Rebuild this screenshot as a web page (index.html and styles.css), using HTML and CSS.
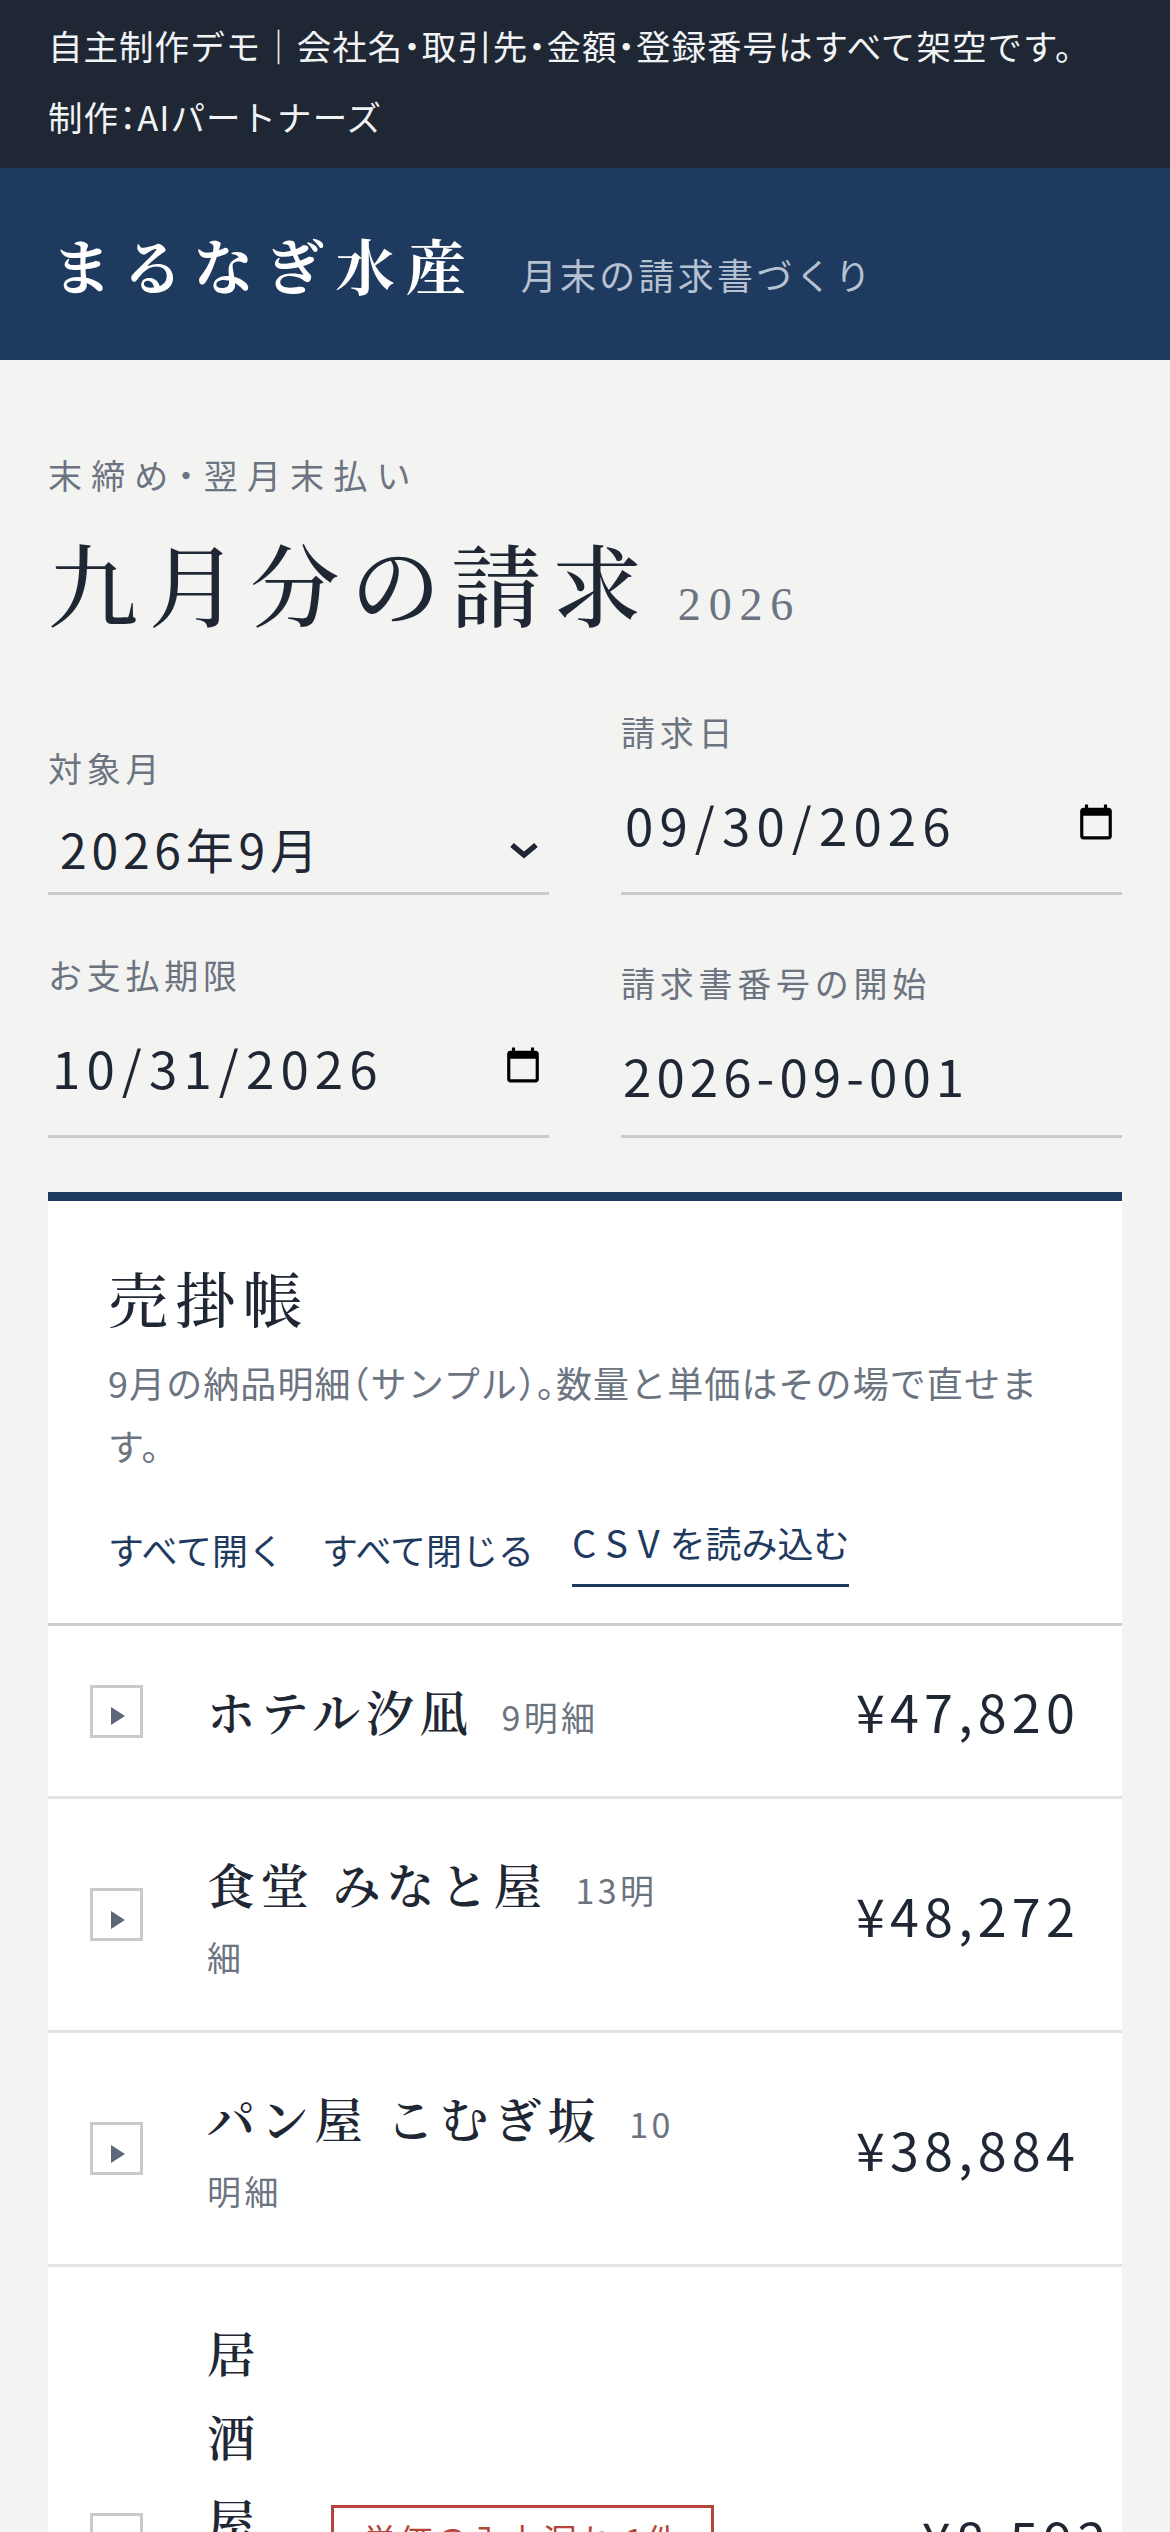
FILE: index.html
```html
<!DOCTYPE html>
<html lang="ja">
<head>
<meta charset="utf-8">
<title>まるなぎ水産 月末の請求書づくり</title>
<link rel="stylesheet" href="styles.css">
</head>
<body>
<div class="notice">
  <p>自主制作デモ<span class="sep">｜</span>会社名・取引先・金額・登録番号はすべて架空です。</p>
  <p>制作：AIパートナーズ</p>
</div>
<header class="masthead">
  <span class="brand">まるなぎ水産</span>
  <span class="tagline">月末の請求書づくり</span>
</header>
<main class="main">
  <p class="eyebrow">末締め・翌月末払い</p>
  <h1 class="title">九月分の請求<span class="year">2026</span></h1>
  <form class="fields">
    <label class="field">
      <span class="field-label">対象月</span>
      <span class="select-wrap">
        <select class="control select">
          <option>2026年9月</option>
          <option>2026年8月</option>
        </select>
        <svg class="chevron" viewBox="0 0 30 17" width="30" height="17" aria-hidden="true"><polyline points="3,3 15,13 27,3" fill="none" stroke="#1e2733" stroke-width="5.5" stroke-linejoin="miter"/></svg>
      </span>
    </label>
    <label class="field">
      <span class="field-label">請求日</span>
      <input class="control date" type="date" value="2026-09-30">
    </label>
    <label class="field">
      <span class="field-label">お支払期限</span>
      <input class="control date" type="date" value="2026-10-31">
    </label>
    <label class="field">
      <span class="field-label">請求書番号の開始</span>
      <input class="control text" type="text" value="2026-09-001">
    </label>
  </form>

  <section class="ledger">
    <div class="ledger-head">
      <h2 class="ledger-title">売掛帳</h2>
      <p class="ledger-desc">9月の納品明細（サンプル）。数量と単価はその場で直せます。</p>
      <div class="actions">
        <button class="action" type="button">すべて開く</button>
        <button class="action" type="button">すべて閉じる</button>
        <button class="action csv" type="button"><span class="latin">CSV</span>を読み込む</button>
      </div>
    </div>
    <ul class="rows">
      <li class="row">
        <button class="toggle" type="button" aria-label="開く"><svg viewBox="0 0 14 18" width="14" height="18"><polygon points="0,0 14,9 0,18" fill="#5c6877"/></svg></button>
        <div class="row-main">
          <p class="row-name"><span class="name">ホテル汐凪</span><span class="count">9明細</span></p>
        </div>
        <span class="amount">¥47,820</span>
      </li>
      <li class="row">
        <button class="toggle" type="button" aria-label="開く"><svg viewBox="0 0 14 18" width="14" height="18"><polygon points="0,0 14,9 0,18" fill="#5c6877"/></svg></button>
        <div class="row-main">
          <p class="row-name"><span class="name">食堂 みなと屋</span><span class="count">13明細</span></p>
        </div>
        <span class="amount">¥48,272</span>
      </li>
      <li class="row">
        <button class="toggle" type="button" aria-label="開く"><svg viewBox="0 0 14 18" width="14" height="18"><polygon points="0,0 14,9 0,18" fill="#5c6877"/></svg></button>
        <div class="row-main">
          <p class="row-name"><span class="name">パン屋 こむぎ坂</span><span class="count">10明細</span></p>
        </div>
        <span class="amount">¥38,884</span>
      </li>
      <li class="row">
        <button class="toggle" type="button" aria-label="開く"><svg viewBox="0 0 14 18" width="14" height="18"><polygon points="0,0 14,9 0,18" fill="#5c6877"/></svg></button>
        <div class="row-main">
          <p class="row-name"><span class="name">居酒屋 灯</span><span class="count">6明細</span></p>
          <span class="badge">単価の入力漏れ 1件</span>
        </div>
        <span class="amount">¥8,592</span>
      </li>
    </ul>
  </section>
</main>
</body>
</html>
```

FILE: styles.css
```css
* {
  box-sizing: border-box;
  margin: 0;
  padding: 0;
}

html,
body {
  background: #f3f3f1;
}

body {
  font-family: "Noto Sans CJK JP", "Noto Sans", sans-serif;
  font-feature-settings: "halt" 1;
  color: #1e2733;
}

/* top notice */
.notice {
  background: #1e2733;
  color: #f1f3f5;
  padding: 10px 48px 16px;
  font-size: 34.5px;
  line-height: 71px;
  letter-spacing: 0.03em;
}

.sep {
  font-feature-settings: normal;
}

/* masthead */
.masthead {
  background: #1f3a5f;
  height: 192px;
  padding: 57px 48px 57px 52px;
  display: flex;
  align-items: baseline;
  gap: 44px;
}

.brand {
  font-family: "Noto Serif CJK JP", "Noto Serif JP", "Liberation Serif", serif;
  font-size: 60px;
  font-weight: 700;
  line-height: 78px;
  letter-spacing: 0.18em;
  color: #ffffff;
}

.tagline {
  font-size: 36px;
  letter-spacing: 0.09em;
  color: #b6c1d2;
}

/* main */
.main {
  padding: 90px 48px 0;
}

.eyebrow {
  font-size: 34px;
  line-height: 50px;
  letter-spacing: 0.27em;
  color: #6b7480;
}

.title {
  margin-top: 24px;
  font-family: "Noto Serif CJK JP", "Noto Serif JP", "Liberation Serif", serif;
  font-size: 90px;
  font-weight: 500;
  line-height: 114px;
  letter-spacing: 0.12em;
  color: #1e2733;
}

.year {
  margin-left: 25px;
  font-family: "Liberation Serif", serif;
  font-size: 46px;
  font-weight: 400;
  letter-spacing: 0.17em;
  color: #6b7480;
}

/* fields */
.fields {
  margin-top: 44px;
  display: grid;
  grid-template-columns: 1fr 1fr;
  column-gap: 72px;
  row-gap: 54px;
  align-items: end;
}

.field {
  display: flex;
  flex-direction: column;
}

.field-label {
  font-size: 34px;
  line-height: 51px;
  letter-spacing: 0.14em;
  color: #6b7480;
  margin-bottom: 6px;
}

.control {
  display: block;
  width: 100%;
  font-family: inherit;
  font-size: 51px;
  letter-spacing: 0.1em;
  color: #1e2733;
  background: transparent;
  border: 0;
  border-bottom: 3px solid #c9cccb;
  border-radius: 0;
  outline: none;
}

.select-wrap {
  position: relative;
  display: block;
}

.select {
  appearance: none;
  -webkit-appearance: none;
  height: 96px;
  padding: 6px 60px 0 12px;
  font-size: 48px;
  letter-spacing: 0.1em;
  line-height: 71px;
}

.chevron {
  position: absolute;
  right: 10px;
  bottom: 36px;
  pointer-events: none;
}

.date {
  height: 132px;
  padding: 0 6px 8px 3px;
  letter-spacing: 0.12em;
}

.date::-webkit-calendar-picker-indicator {
  width: 40px;
  height: 42px;
  padding: 0;
  margin: 0;
}

.text {
  height: 124px;
  padding: 0 0 0 2px;
  letter-spacing: 0.1em;
}

/* ledger card */
.ledger {
  margin-top: 54px;
  background: #ffffff;
  border-top: 9px solid #1f3a5f;
}

.ledger-head {
  padding: 54px 60px 36px;
  border-bottom: 3px solid #cbcecd;
}

.ledger-title {
  font-family: "Noto Serif CJK JP", "Noto Serif JP", "Liberation Serif", serif;
  font-size: 60px;
  font-weight: 500;
  line-height: 84px;
  letter-spacing: 0.12em;
  color: #1e2733;
}

.ledger-desc {
  margin-top: 12px;
  font-size: 36px;
  line-height: 63px;
  letter-spacing: 0.03em;
  color: #6b7480;
}

.actions {
  margin-top: 39px;
  display: flex;
  gap: 38px;
}

.action {
  font-family: inherit;
  font-size: 36px;
  line-height: 52px;
  color: #1f3a5f;
  background: none;
  border: 0;
  padding: 0 0 6px;
}

.action.csv {
  border-bottom: 3px solid #1f3a5f;
  padding-bottom: 16px;
}

.latin {
  font-size: 38px;
  letter-spacing: 0.26em;
}

/* rows */
.rows {
  list-style: none;
}

.row {
  display: grid;
  grid-template-columns: 53px 1fr 334px;
  column-gap: 64px;
  align-items: center;
  padding: 43px 42px;
  border-bottom: 3px solid #e1e4e3;
}

.toggle {
  width: 53px;
  height: 53px;
  border: 3px solid #c8cbca;
  background: #ffffff;
  display: flex;
  align-items: center;
  justify-content: center;
  padding: 0;
}

.toggle svg {
  margin: 10px 0 0 3px;
}

.row-main {
  display: flex;
  align-items: center;
  gap: 42px;
}

.row-name {
  flex: 1 1 auto;
  font-size: 34px;
  line-height: 61px;
}

.name {
  font-family: "Noto Serif CJK JP", "Noto Serif JP", "Liberation Serif", serif;
  font-size: 48px;
  font-weight: 600;
  line-height: 84px;
  letter-spacing: 0.12em;
  color: #1e2733;
  margin-right: 28px;
}

.count {
  font-size: 34px;
  letter-spacing: 0.1em;
  color: #6b7480;
}

.badge {
  flex: none;
  border: 3px solid #b5443a;
  color: #b5443a;
  font-size: 34px;
  line-height: 51px;
  letter-spacing: 0.06em;
  padding: 6px 29px;
  white-space: nowrap;
}

.amount {
  text-align: right;
  font-size: 52px;
  line-height: 72px;
  letter-spacing: 0.1em;
  color: #1e2733;
}
```
